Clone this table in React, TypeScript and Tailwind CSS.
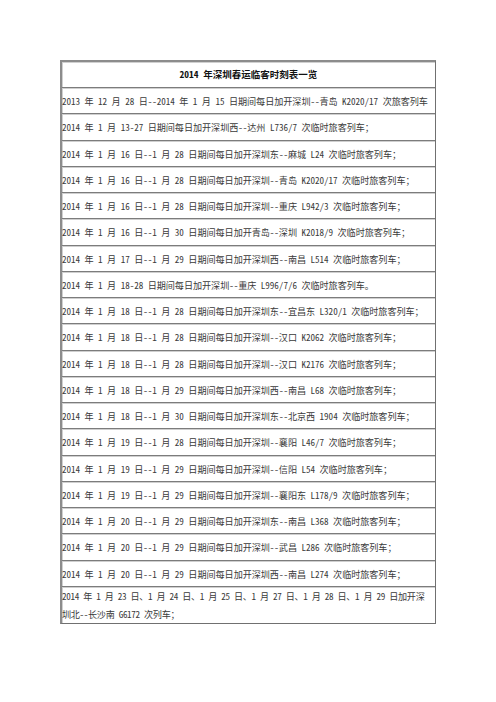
import React from "react";

const rows: string[] = [
  "2013 年 12 月 28 日--2014 年 1 月 15 日期间每日加开深圳--青岛 K2020/17 次旅客列车",
  "2014 年 1 月 13-27 日期间每日加开深圳西--达州 L736/7 次临时旅客列车；",
  "2014 年 1 月 16 日--1 月 28 日期间每日加开深圳东--麻城 L24 次临时旅客列车；",
  "2014 年 1 月 16 日--1 月 28 日期间每日加开深圳--青岛 K2020/17 次临时旅客列车；",
  "2014 年 1 月 16 日--1 月 28 日期间每日加开深圳--重庆 L942/3 次临时旅客列车；",
  "2014 年 1 月 16 日--1 月 30 日期间每日加开青岛--深圳 K2018/9 次临时旅客列车；",
  "2014 年 1 月 17 日--1 月 29 日期间每日加开深圳西--南昌 L514 次临时旅客列车；",
  "2014 年 1 月 18-28 日期间每日加开深圳--重庆 L996/7/6 次临时旅客列车。",
  "2014 年 1 月 18 日--1 月 28 日期间每日加开深圳东--宜昌东 L320/1 次临时旅客列车；",
  "2014 年 1 月 18 日--1 月 28 日期间每日加开深圳--汉口 K2062 次临时旅客列车；",
  "2014 年 1 月 18 日--1 月 28 日期间每日加开深圳--汉口 K2176 次临时旅客列车；",
  "2014 年 1 月 18 日--1 月 29 日期间每日加开深圳西--南昌 L68 次临时旅客列车；",
  "2014 年 1 月 18 日--1 月 30 日期间每日加开深圳东--北京西 1904 次临时旅客列车；",
  "2014 年 1 月 19 日--1 月 28 日期间每日加开深圳--襄阳 L46/7 次临时旅客列车；",
  "2014 年 1 月 19 日--1 月 29 日期间每日加开深圳--信阳 L54 次临时旅客列车；",
  "2014 年 1 月 19 日--1 月 29 日期间每日加开深圳--襄阳东 L178/9 次临时旅客列车；",
  "2014 年 1 月 20 日--1 月 29 日期间每日加开深圳东--南昌 L368 次临时旅客列车；",
  "2014 年 1 月 20 日--1 月 29 日期间每日加开深圳--武昌 L286 次临时旅客列车；",
  "2014 年 1 月 20 日--1 月 29 日期间每日加开深圳西--南昌 L274 次临时旅客列车；",
];

export default function App() {
  return (
    <div className="w-[496px] h-[702px] bg-white overflow-hidden font-['Noto_Sans_CJK_SC',sans-serif] [font-feature-settings:'hwid'] text-[#3a3a3a]">
      <div className="ml-[60px] mt-[60px] w-[376px] border-l-2 border-t-2 border-l-[#8c8c8c] border-t-[#8c8c8c] border-r border-b border-r-[#707070] border-b-[#707070] shadow-[inset_1px_1px_0_#d0d0d0]">
        <div className="h-[25px] flex items-center justify-center pt-[1px] text-[9.5px] font-bold text-[#111] leading-none">
          2014 年深圳春运临客时刻表一览
        </div>
        {rows.map((r, i) => (
          <div
            key={i}
            className="h-[26.26px] flex items-center pt-[2px] border-t border-t-[#7c7c7c] shadow-[inset_0_1px_0_#cfcfcf] overflow-hidden whitespace-nowrap text-[9.12px] tracking-[-0.05px] leading-none"
          >
            {r}
          </div>
        ))}
        <div className="h-[37px] flex flex-col justify-center pt-[1px] border-t border-t-[#7c7c7c] shadow-[inset_0_1px_0_#cfcfcf] overflow-hidden whitespace-nowrap text-[9.12px] tracking-[-0.32px] leading-[18px]">
          <div>2014 年 1 月 23 日、1 月 24 日、1 月 25 日、1 月 27 日、1 月 28 日、1 月 29 日加开深</div>
          <div>圳北--长沙南 G6172 次列车；</div>
        </div>
      </div>
    </div>
  );
}
